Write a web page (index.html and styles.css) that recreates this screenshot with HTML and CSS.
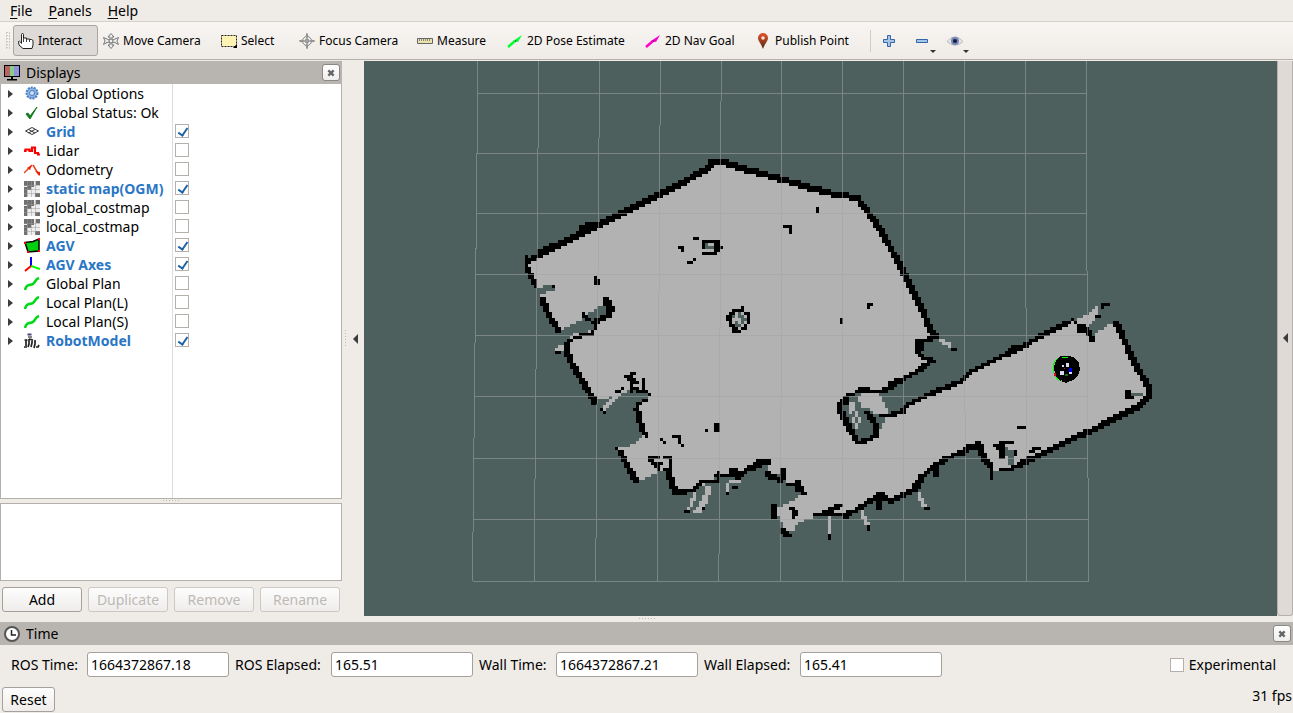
FILE: index.html
```html
<!DOCTYPE html>
<html lang="en">
<head>
<meta charset="utf-8">
<title>RViz</title>
<link rel="stylesheet" href="styles.css">
</head>
<body>
<svg class="defs" aria-hidden="true">
  <symbol id="map-icon" viewBox="0 0 16 16"><path fill="#eee" d="M0 0h16v16H0z"/><path fill="#707070" d="M0 0h4v5H0zM0 6h3v10H0zM4 0h6v6H7v3H3V5h1zM12 0h4v4h-4zM11 12h5v4h-5z"/><path stroke="#999" stroke-width="1" opacity=".5" d="M3.500 0v16M7.500 0v16M11.500 0v16M0 4.500h16M0 8.500h16M0 12.500h16" fill="none"/></symbol>
  <symbol id="path-icon" viewBox="0 0 16 16"><path d="M1 14C3 6 7 11 10 7S12 3 15 2" fill="none" stroke="#00d818" stroke-width="2.600"/></symbol>
  <symbol id="close-icon" viewBox="0 0 9 9"><path d="M1.500 1.500l6 6M7.500 1.500l-6 6" stroke="#666" stroke-width="2.600"/></symbol>
</svg>

<nav class="menubar">
  <button type="button"><u>F</u>ile</button>
  <button type="button"><u>P</u>anels</button>
  <button type="button"><u>H</u>elp</button>
</nav>

<div class="toolbar">
  <span class="grip"></span>
  <button type="button" class="tool w-interact active"><svg viewBox="0 0 16 16"><path d="M3.500 9V1.500q0-1 1-1t1 1V5h3v1h3v.5h2l1.500 1V12l-1 3.500h-9L1 12 .5 8.500q1-1 2 .5l1 1.500z" fill="#fff" stroke="#222"/><path d="M5.500 5v4M8.500 6v3M11.500 6.500V9" stroke="#444" fill="none"/></svg>Interact</button>
  <button type="button" class="tool w-move"><svg viewBox="0 0 16 16"><g fill="#eee" stroke="#777"><path d="M8 .5L11 4H9v3H7V4H5zM8 15.500L11 12H9V9H7v3H5z"/><path d="M.5 4.500L4 6l3 1.500V9L4 9.500.5 11.500 2 8zM15.500 4.500L12 6 9 7.500V9l3 .5 3.500 2L14 8z"/><circle cx="8" cy="8" r="2"/></g></svg>Move Camera</button>
  <button type="button" class="tool w-select"><svg viewBox="0 0 16 16"><path d="M.5 2.500h15v11H.5z" fill="#fff3b4" stroke="#222" stroke-dasharray="2 1"/><path d="M16 11v4h-4z"/></svg>Select</button>
  <button type="button" class="tool w-focus"><svg viewBox="0 0 16 16"><g fill="none" stroke="#888"><circle cx="8" cy="8" r="4.500"/><circle cx="8" cy="8" r="2"/><path d="M8 4v8M4 8h8"/><path fill="#ddd" d="M8 .3L9 4H7zM8 15.700L9 12H7zM.3 8L4 7v2zM15.700 8L12 7v2z"/></g></svg>Focus Camera</button>
  <button type="button" class="tool w-measure"><svg viewBox="0 0 16 16"><path d="M.5 5.500h15v5H.5z" fill="#ece2ac" stroke="#666"/><path d="M2.500 6v2M4.500 6v2M6.500 6v2M8.500 6v2M10.500 6v2M12.500 6v2" stroke="#888"/></svg>Measure</button>
  <button type="button" class="tool w-pose"><svg viewBox="0 0 16 16"><path d="M1 14L8 8" stroke="#0f3" stroke-width="2.500"/><path d="M15 2l-4 7-5-1z" fill="#0f3"/><path d="M8 7l2 1-2 1z" fill="#063"/></svg>2D Pose Estimate</button>
  <button type="button" class="tool w-nav"><svg viewBox="0 0 16 16"><path d="M1 14L8 8" stroke="#f0c" stroke-width="2.500"/><path d="M15 2l-4 7-5-1z" fill="#f0c"/><path d="M8 7l2 1-2 1z" fill="#805"/></svg>2D Nav Goal</button>
  <button type="button" class="tool w-publish"><svg viewBox="0 0 16 16"><defs><linearGradient id="pin" x2="0" y2="1"><stop offset="0" stop-color="#e8522c"/><stop offset="1" stop-color="#4b2a14"/></linearGradient></defs><path d="M8 0a5 5 0 0 1 5 5c0 3-3 5-5 11C6 10 3 8 3 5a5 5 0 0 1 5-5z" fill="url(#pin)"/><circle cx="8" cy="5" r="1.800" fill="#f7dfd5"/></svg>Publish Point</button>
  <span class="divider"></span>
  <button type="button" class="mini" aria-label="Add tool"><svg viewBox="0 0 16 16"><path d="M6.500 2.500h3v4h4v3h-4v4h-3v-4h-4v-3h4z" fill="#a5c4e8" stroke="#3465a4"/></svg></button>
  <button type="button" class="mini drop" aria-label="Remove tool"><svg viewBox="0 0 16 16"><path d="M2.500 6.500h11v3h-11z" fill="#a5c4e8" stroke="#3465a4"/></svg></button>
  <button type="button" class="mini drop" aria-label="Visibility"><svg viewBox="0 0 16 16"><path d="M0 8.500Q8-1 16 8.500 8 16 0 8.500z" fill="#e7e6e3" stroke="#bbb"/><circle cx="8" cy="8" r="4" fill="#7485bd"/><circle cx="8" cy="8" r="2" fill="#151b38"/></svg></button>
</div>

<main class="main">
  <section class="displays">
    <header class="title">
      <svg viewBox="0 0 16 16"><path d="M0 0h16v12H0z"/><path d="M1 1h5v10H1z" fill="#b86464"/><path d="M6 1h4v10H6z" fill="#86cf86"/><path d="M10 1h5v10h-5z" fill="#9292dc"/><path d="M7 12h2v2h4v1.500H3V14h4z"/></svg>
      <h2>Displays</h2>
      <button type="button" class="close" aria-label="Close Displays"><svg><use href="#close-icon"/></svg></button>
    </header>
    <ul class="tree">
      <li><button type="button" class="expand" aria-label="Expand"></button><svg viewBox="0 0 16 16"><circle cx="8" cy="7" r="5.500" fill="#8db4e4" stroke="#4a7fc4" stroke-width="2" stroke-dasharray="2 1"/><circle cx="8" cy="7" r="2.500" fill="#d2e1f4" stroke="#4a7fc4"/></svg><span>Global Options</span></li>
      <li><button type="button" class="expand" aria-label="Expand"></button><svg viewBox="0 0 16 16"><path d="M2 9l2-1 2 3 7-9-7 12z" fill="#187a20" stroke="#187a20"/></svg><span>Global Status: Ok</span></li>
      <li class="on"><button type="button" class="expand" aria-label="Expand"></button><svg viewBox="0 0 16 16"><path d="M1.500 7L8 3.500 14.500 7 8 10.500zM4.500 5.500l6.500 3.500M11 5.500L4.500 9" fill="none" stroke="#333"/></svg><label for="d1">Grid</label><input type="checkbox" id="d1" checked></li>
      <li><button type="button" class="expand" aria-label="Expand"></button><svg viewBox="0 0 16 16"><path d="M0 8h1.500V6.500h4V8H8V4.500h3V10h3v1.500h2" fill="none" stroke="#f00" stroke-width="2.200"/></svg><label for="d2">Lidar</label><input type="checkbox" id="d2"></li>
      <li><button type="button" class="expand" aria-label="Expand"></button><svg viewBox="0 0 16 16"><path d="M0 11l8-8M9 3l6 10" stroke="#e42" stroke-width="1.500"/><path d="M3 6l5-3-2 5zM11 9l5 1v4z" fill="#e20"/></svg><label for="d3">Odometry</label><input type="checkbox" id="d3"></li>
      <li class="on"><button type="button" class="expand" aria-label="Expand"></button><svg><use href="#map-icon"/></svg><label for="d4">static map(OGM)</label><input type="checkbox" id="d4" checked></li>
      <li><button type="button" class="expand" aria-label="Expand"></button><svg><use href="#map-icon"/></svg><label for="d5">global_costmap</label><input type="checkbox" id="d5"></li>
      <li><button type="button" class="expand" aria-label="Expand"></button><svg><use href="#map-icon"/></svg><label for="d6">local_costmap</label><input type="checkbox" id="d6"></li>
      <li class="on"><button type="button" class="expand" aria-label="Expand"></button><svg viewBox="0 0 16 16"><path d="M1 4.500l8-1L15 1v12l-11 1z" fill="#00d010" stroke="#000" stroke-width="1.500"/><path d="M0 4h2v2H0zM14 0h2v2h-2zM14 12h2v2h-2zM3 13h2v2H3z" fill="#f00"/></svg><label for="d7">AGV</label><input type="checkbox" id="d7" checked></li>
      <li class="on"><button type="button" class="expand" aria-label="Expand"></button><svg viewBox="0 0 16 16"><g stroke-width="2" fill="none"><path d="M7 9V0" stroke="#00f"/><path d="M7 9l9 3" stroke="#0f0"/><path d="M7 9l-6 5" stroke="#f00"/></g></svg><label for="d8">AGV Axes</label><input type="checkbox" id="d8" checked></li>
      <li><button type="button" class="expand" aria-label="Expand"></button><svg><use href="#path-icon"/></svg><label for="d9">Global Plan</label><input type="checkbox" id="d9"></li>
      <li><button type="button" class="expand" aria-label="Expand"></button><svg><use href="#path-icon"/></svg><label for="d10">Local Plan(L)</label><input type="checkbox" id="d10"></li>
      <li><button type="button" class="expand" aria-label="Expand"></button><svg><use href="#path-icon"/></svg><label for="d11">Local Plan(S)</label><input type="checkbox" id="d11"></li>
      <li class="on"><button type="button" class="expand" aria-label="Expand"></button><svg viewBox="0 0 16 16"><path d="M3.500 1.500h4" stroke="#447" stroke-width="2"/><path d="M4 4h4" stroke="#111"/><path d="M.5 7h3M2 7v6M0 14h3M5 6v5l-1 3M5 6l4 1M8 7v3l-1 4M11 7v4l-1 4M12 14h2l1-2" fill="none" stroke="#222" stroke-width="1.700"/></svg><label for="d12">RobotModel</label><input type="checkbox" id="d12" checked></li>
    </ul>
    <div class="hdots"></div>
    <div class="help"></div>
    <div class="actions">
      <button type="button" class="btn">Add</button>
      <button type="button" class="btn" disabled>Duplicate</button>
      <button type="button" class="btn" disabled>Remove</button>
      <button type="button" class="btn" disabled>Rename</button>
    </div>
  </section>
  <div class="splitter"><span class="vdots"></span><button type="button" class="arrow" aria-label="Hide left panel"></button></div>
  <div class="view">
    <svg viewBox="364 61 913 555" preserveAspectRatio="xMidYMid slice" shape-rendering="crispEdges" role="img" aria-label="Occupancy map">
      <path id="free" fill="#b2b2b2"/>
      <path id="unknown" fill="#4d605e"/>
      <path id="wall" fill="#000"/>
      <path id="grid" fill="none" stroke="#a4a4a8" stroke-opacity=".55"/>
      <g class="robot">
        <path d="M1061 356l9 0 5 2 4 5 1 7-2 6-5 4-7 3-7-3-4-5-1-8 2-7z"/>
        <path d="M1053 373v-7l2-5 3-3M1062 357h6M1055 376l4 5M1061 380v1" fill="none" stroke="#0f0"/>
        <path d="M1060 371h4v4h-4zM1066 363h3v4h-3zM1062 365h2v2h-2zM1069 371h3v3h-3z" fill="#d8dcf2"/>
        <path d="M1069 368h3v4h-3z" fill="#00f"/><path d="M1054 373h2v3h-2zM1064 368h1v1h-1z" fill="#d01020"/><path d="M1065 374h3v2h-3z" fill="#087018"/>
      </g>
    </svg>
  </div>
  <div class="right"><button type="button" class="arrow" aria-label="Show right panel"></button></div>
</main>
<div class="hdots wide"></div>

<section class="time">
  <header class="title">
    <svg viewBox="0 0 16 16"><circle cx="8" cy="8" r="7" fill="#fff" stroke="#555" stroke-width="2"/><path d="M7.500 4v5H12" fill="none" stroke="#222" stroke-width="1.500"/></svg>
    <h2>Time</h2>
    <button type="button" class="close" aria-label="Close Time"><svg><use href="#close-icon"/></svg></button>
  </header>
  <div class="clocks">
    <label for="rt">ROS Time:</label><input type="text" id="rt" value="1664372867.18">
    <label for="re">ROS Elapsed:</label><input type="text" id="re" value="165.51">
    <label for="wt">Wall Time:</label><input type="text" id="wt" value="1664372867.21">
    <label for="we">Wall Elapsed:</label><input type="text" id="we" value="165.41">
    <span class="experimental"><input type="checkbox" id="ex"><label for="ex">Experimental</label></span>
  </div>
</section>
<footer class="status"><button type="button" class="btn reset">Reset</button><span>31 fps</span></footer>
<script src="map.js"></script>
</body>
</html>
```
FILE: styles.css
```css
* { box-sizing: border-box; }
body { margin: 0; height: 100vh; display: flex; flex-direction: column; overflow: hidden; background: #efebe7; color: #000; font: 14px/18px "Noto Sans", "Open Sans", sans-serif; }
button, input { font: inherit; color: inherit; margin: 0; }
button { padding: 0; border: 0; background: none; }
svg { display: block; flex: none; width: 16px; height: 16px; }
.defs { position: absolute; width: 0; height: 0; }

.menubar { display: flex; gap: 16px; height: 22px; padding-left: 10px; border-bottom: 1px solid #d5d0cc; }
.menubar u { text-underline-offset: 2px; }
.toolbar { display: flex; align-items: center; height: 38px; flex: none; padding-left: 5px; background: linear-gradient(#f8f5f2, #efebe7); border-bottom: 1px solid #b5b0ab; font-size: 12px; line-height: 16px; }
.grip { width: 7px; height: 18px; margin-right: 1px; background: radial-gradient(circle at 1px 1px, #d0cbc6 50%, transparent 50%) 0 0 / 3px 3px; background: conic-gradient(#cdc8c3 25%, transparent 0) 0 0 / 3px 3px; background-clip: content-box; padding-right: 2px; }
.tool { display: flex; align-items: center; gap: 4px; height: 31px; padding: 0 4px; white-space: nowrap; border: 1px solid transparent; border-radius: 3px; }
.active { background: #dedad7; border-color: #aaa5a0; }
.w-interact { width: 85px; }
.w-move { width: 118px; }
.w-select { width: 78px; }
.w-focus { width: 118px; }
.w-measure { width: 90px; }
.w-pose { width: 138px; }
.w-nav { width: 110px; }
.w-publish { width: 120px; }
.divider { width: 1px; height: 22px; background: #d0cbc6; }
.mini { position: relative; width: 33px; height: 30px; padding-left: 10px; }
.drop::after { content: ""; position: absolute; right: 1px; bottom: 3px; border: 3px solid transparent; border-top-color: #333; border-bottom: 0; }

.main { display: flex; flex: 1; min-height: 0; padding-top: 1px; }
.displays { display: flex; flex-direction: column; flex: none; width: 342px; }
.title { display: flex; align-items: center; gap: 6px; flex: none; height: 23px; padding: 0 2px 0 4px; background: #b8b4b0; }
.title h2 { flex: 1; margin: 0; font-size: 14px; font-weight: 400; }
.close { display: grid; place-items: center; width: 18px; height: 17px; border: 1px solid #8d8883; border-radius: 3px; background: linear-gradient(#fff, #eee); }
.close svg { width: 8px; height: 8px; }
.tree { flex: 1; min-height: 0; margin: 0; padding: 0; list-style: none; border: 1px solid #b5b0ab; border-top: 0; background: linear-gradient(#dcdcdc, #dcdcdc) 171px 0 / 1px 100% no-repeat #fff; }
.tree li { display: grid; grid-template-columns: 23px 22px 129px 14px; align-items: center; height: 19px; white-space: nowrap; }
.tree input { align-self: start; margin-top: 2px; }
.expand { width: 0; height: 8px; margin-left: 7px; border: 4px solid transparent; border-left: 5px solid #3c3c3c; border-right: 0; }
.on label { color: #2a76c6; font-weight: 700; }
input[type="checkbox"] { appearance: none; width: 14px; height: 14px; border: 1px solid #b5b0ab; background: #fff; position: relative; }
input:checked::after { content: ""; position: absolute; left: 4px; top: 1px; width: 4px; height: 8px; border: solid #1f62a5; border-width: 0 2px 2px 0; transform: rotate(35deg); }
.hdots { flex: none; height: 4px; background: linear-gradient(90deg, #bfbab5 1px, transparent 1px) 0 1px / 3px 1px content-box repeat-x; padding: 0 163px; }
.help { flex: none; height: 78px; border: 1px solid #b5b0ab; background: #fff; }
.actions { display: flex; gap: 6px; padding: 6px 2px 4px; }
.btn { flex: 1; height: 25px; border: 1px solid #a5a09b; border-radius: 3px; background: linear-gradient(#fdfdfd, #efedeb); }
.btn:disabled { color: #bdb9b6; border-color: #ccc8c4; }
.splitter { display: flex; align-items: center; flex: none; width: 22px; padding-left: 3px; gap: 7px; }
.vdots { width: 1px; height: 17px; background: linear-gradient(#bfbab5 1px, transparent 1px) 0 0 / 1px 3px; }
.arrow { width: 5px; height: 10px; border: 5px solid transparent; border-right-color: #3c3c3c; border-left: 0; }
.view { flex: 1; min-width: 0; background: #4d605e; }
.view svg { width: 100%; height: 100%; }
.right { display: flex; align-items: center; justify-content: center; flex: none; width: 16px; border: 1px solid #b5b0ab; border-top: 0; border-radius: 0 0 3px 3px; background: #dedad7; }
.wide { height: 6px; width: 16px; padding: 0; margin: 0 auto; background-position: 0 2px; }

.clocks { display: grid; grid-template-columns: 70px 142px 90px 142px 71px 142px 90px 142px 1fr; column-gap: 6px; align-items: center; height: 39px; padding: 0 17px 0 11px; white-space: nowrap; }
.clocks input[type="text"] { width: 142px; height: 25px; padding: 0 3px; border: 1px solid #a5a09b; border-radius: 3px; background: #fff; }
.experimental { display: flex; align-items: center; justify-content: flex-end; gap: 5px; }
.status { display: flex; justify-content: space-between; flex: none; height: 29px; padding: 3px 1px 1px 2px; }
.reset { flex: none; width: 53px; }
```
FILE: map.js
```js
// Occupancy map: outlines are rasterised into square cells.
const CELL = 3;
const cellOf = v => Math.floor(v / CELL);
const parse = s => s.trim().split(/\s+/).map(p => p.split(",").map(Number));

const outline = `525,262 538,255 553,247 587,230 617,216 657,196 687,180 710,168 715,163 725,163 740,168 777,179 807,188 840,197 857,198
 867,208 880,227 893,250 907,278 920,303 932,332 923,342 918,348 922,355 932,360 920,370 900,380 885,391 863,390 838,402 847,423 858,443 878,435
 886,416 900,413 907,405 927,395 947,387 960,382 970,372 1003,355 1027,343 1047,332 1067,323 1088,315 1097,307 1099,316 1087,328 1093,337 1108,324
 1115,323 1123,337 1130,353 1138,370 1145,380 1150,390 1150,398 1127,412 1110,418 1097,427 1073,437 1053,447 1040,453 1020,463 1002,470 992,470
 983,453 980,445 973,445 963,453 947,458 935,468 920,478 917,488 903,495 890,502 883,495 867,503 853,512 840,515 817,515 807,520 797,523
 792,533 785,530 780,517 775,510 793,500 803,494 800,482 790,487 783,472 773,478 765,462 740,475 717,477 703,485 693,492 675,492 670,477 665,468
 657,473 645,478 637,482 627,465 618,448 633,445 645,435 640,425 637,413 640,405 650,395 643,390 620,392 600,401 590,393 580,377 570,360 567,350
 568,342 577,337 593,333 595,323 607,318 612,310 607,302 560,332 548,313 542,297 537,287 530,275 525,265`;

// [points, brush columns, brush rows]
const walls = [
  ["527,261 538,256 553,247 587,230 617,216 657,195 687,180 710,167 714,163 725,163 740,168 777,178 807,187 840,196 857,197", 1, 2],
  ["857,197 867,210 880,229 893,252 907,280 920,305 932,332", 2, 1], ["540,253 556,245", 2, 2], ["582,228 597,224", 2, 2], ["712,162 726,162", 2, 2],
  ["932,332 937,337 923,341 918,345 918,352 924,358 932,360 920,370 900,380 883,392 873,392", 2, 1],
  ["918,341 918,350", 3, 1], ["900,380 892,384", 2, 2],
  ["868,389 860,391 847,396", 1, 1], ["860,391 868,389", 2, 2], ["840,402 841,412 847,423 852,432 858,443 867,440 877,435 875,423 868,413", 2, 1], ["842,402 846,400", 2, 2],
  ["883,416 900,413 907,405 927,395 947,387 960,382 970,372 980,367", 2, 1],
  ["980,367 1003,356 1027,344 1047,333 1067,323", 2, 1], ["1010,351 1020,347", 2, 2],
  ["1079,325 1085,328 1093,339", 2, 1], ["1081,329 1085,329", 2, 2], ["1073,319 1074,321", 1, 1],
  ["1097,315 1098,315", 1, 1], ["1101,307 1107,303", 1, 1],
  ["1116,322 1123,337 1130,353 1138,370 1145,380 1150,390 1150,397", 2, 1],
  ["1148,396 1140,405 1127,412 1110,420 1097,428 1073,438 1053,448 1040,455 1020,464", 1, 2],
  ["1020,464 1012,468 1002,470", 2, 1], ["991,462 991,477", 1, 1], ["983,456 978,445", 2, 2], ["978,445 973,444 960,455", 2, 1], ["983,456 991,466", 2, 1],
  ["980,445 967,450 947,458 935,466 920,478 915,488 903,495 892,501", 2, 1], ["936,466 936,476", 2, 1], ["920,481 915,488", 2, 2],
  ["889,500 880,494 867,503 853,512 840,515 817,515", 2, 1], ["879,495 879,507", 2, 1], ["840,506 825,513", 2, 1], ["815,514 847,516", 2, 1],
  ["803,493 799,485 790,485", 2, 1], ["799,482 799,490", 2, 1], ["783,472 781,481", 2, 2], ["773,478 768,474", 2, 2], ["765,461 759,462", 3, 2], ["759,464 751,468", 2, 2],
  ["774,508 774,515", 2, 2], ["783,530 789,536", 2, 1], ["791,508 797,512 793,517", 1, 1],
  ["751,467 740,475 735,473 727,475 718,474", 2, 1], ["732,470 738,478", 2, 2], ["718,472 717,480 703,481 693,490 675,491", 1, 1], ["683,491 675,491", 2, 2],
  ["675,491 670,477 667,468", 2, 1], ["636,481 627,465 620,450", 2, 1], ["616,447 617,447", 1, 1],
  ["646,435 640,425 637,413 638,404 645,400", 1, 1], ["637,408 642,429", 2, 1],
  ["650,394 643,391 633,389", 1, 1], ["644,379 643,390", 1, 1], ["633,372 632,391", 1, 1], ["626,376 635,381", 2, 1], ["617,392 623,388", 1, 1],
  ["595,402 590,393 580,377 570,360 567,350 567,342", 2, 1], ["602,410 603,411", 1, 1], ["566,342 577,337 592,333 596,325 586,318 582,314", 1, 1],
  ["557,351 558,351", 2, 1], ["596,321 607,316 611,310", 2, 1], ["611,309 606,301", 2, 2],
  ["559,331 548,313 542,297", 2, 1], ["536,286 530,275 525,265 527,258", 1, 2],
  ["706,240 715,240 717,246 715,253 706,253", 2, 1], ["703,244 704,246", 1, 1], ["720,247 722,247", 1, 1], ["717,245 717,250", 2, 1],
  ["694,239 697,239", 1, 1], ["680,248 682,248 682,251", 1, 1], ["687,262 690,262 694,260", 1, 1],
  ["596,278 597,284", 1, 1], ["598,281 599,284", 1, 1], ["552,286 553,287", 1, 1],
  ["742,307 742,311 747,314 748,322 744,328 737,332 733,327 728,317 733,311 740,311", 1, 1], ["735,329 736,331", 2, 1],
  ["816,208 816,212", 1, 1], ["785,227 789,227 789,231", 1, 1], ["871,303 868,303 868,307", 1, 1], ["840,318 840,322", 1, 1],
  ["717,426 718,428", 2, 2], ["705,431 706,431", 1, 1], ["662,440 663,441", 1, 1], ["674,437 678,437 678,442 681,444", 1, 1],
  ["650,456 657,456", 1, 1], ["650,460 655,464 658,469 660,463", 1, 1], ["665,457 669,457 669,465", 1, 1],
  ["1018,428 1024,428", 1, 1], ["1021,426 1024,426", 1, 1], ["997,445 1010,442", 2, 1], ["1000,447 1003,458", 2, 1], ["1014,450 1015,454", 1, 1],
  ["1030,451 1038,448", 1, 1], ["1128,392 1128,398", 2, 1], ["1132,397 1133,397", 1, 1],
  ["686,511 688,511", 1, 1], ["702,508 703,508", 1, 1], ["828,536 828,537", 1, 1], ["868,527 868,528", 1, 1], ["926,508 927,509", 1, 1], ["953,348 954,349", 1, 1], ["727,493 728,493", 1, 1], ["734,486 735,486", 1, 1]
];
const freeLines = [
  ["695,492 692,503 688,509", 1, 1], ["709,486 704,502 697,511", 2, 1], ["728,483 727,491", 1, 1], ["732,481 738,482", 2, 1], ["828,518 828,534", 1, 1],
  ["862,512 865,520 868,524", 1, 1], ["918,493 921,500 925,506", 1, 1], ["940,340 950,346", 1, 1], ["603,408 612,400 621,391", 1, 1],
  ["559,349 562,347", 2, 1], ["572,336 590,332", 1, 1], ["567,326 580,316 588,309", 1, 1]
];
const pockets = [
  "560,332 569,326 585,318 607,303 610,311 589,321 587,332 565,335", "538,289 550,284 557,288 549,292 540,294",
  "704,244 711,242 714,248 704,250", "733,315 740,313 746,320 741,327 735,326",
  "849,401 857,399 861,412 868,417 869,425 875,432 866,438 858,432", "879,396 888,394 920,374 917,392 886,413",
  "1006,448 1013,449 1013,465 1007,463", "1132,394 1144,394 1144,397 1132,397", "760,463 763,463 763,467 760,467"
];
const speckles = ["849,403 851,412", "852,403 853,409", "857,412 859,421", "854,418 856,427", "737,316 739,323", "709,243 712,243", "577,320 586,315", "656,460 657,461", "779,512 785,512"];
const openings = ["858,398 865,392 879,393 886,406 888,414 876,415 868,408 863,408"];

function inside(x, y, poly) {
  let hit = false;
  for (let i = 0, j = poly.length - 1; i < poly.length; j = i++) {
    const [ax, ay] = poly[i], [bx, by] = poly[j];
    if ((ay > y) !== (by > y) && x < (bx - ax) * (y - ay) / (by - ay) + ax) hit = !hit;
  }
  return hit;
}
function fillCells(text, out) {
  const poly = parse(text);
  const xs = poly.map(p => p[0]), ys = poly.map(p => p[1]);
  for (let cy = cellOf(Math.min(...ys)); cy <= cellOf(Math.max(...ys)); cy++)
    for (let cx = cellOf(Math.min(...xs)); cx <= cellOf(Math.max(...xs)); cx++)
      if (inside((cx + .5) * CELL, (cy + .5) * CELL, poly)) out.add(cx + "," + cy);
}
function lineCells(text, w, h, out) {
  const pts = parse(text);
  for (let i = 1; i < pts.length; i++) {
    const [ax, ay] = pts[i - 1], [bx, by] = pts[i];
    const steps = Math.max(Math.abs(bx - ax), Math.abs(by - ay), 1);
    for (let s = 0; s <= steps; s++) {
      const cx = cellOf(ax + (bx - ax) * s / steps - (w - 1) * CELL / 2);
      const cy = cellOf(ay + (by - ay) * s / steps - (h - 1) * CELL / 2);
      for (let dx = 0; dx < w; dx++) for (let dy = 0; dy < h; dy++) out.add((cx + dx) + "," + (cy + dy));
    }
  }
}
function paint(id, cells) {
  document.getElementById(id).setAttribute("d", [...cells].map(c => {
    const [x, y] = c.split(",").map(Number);
    return `M${x * CELL} ${y * CELL}h${CELL}v${CELL}h-${CELL}z`;
  }).join(""));
}
const free = new Set(), unknown = new Set(), wall = new Set();
fillCells(outline, free);
freeLines.forEach(([p, w, h]) => lineCells(p, w, h, free));
pockets.forEach(p => fillCells(p, unknown));
const light = new Set();
openings.forEach(p => fillCells(p, light));
speckles.forEach(p => lineCells(p, 1, 1, light));
light.forEach(c => { unknown.delete(c); free.add(c); });
walls.forEach(([p, w, h]) => lineCells(p, w, h, wall));
paint("free", free);
paint("unknown", unknown);
paint("wall", wall);

let lines = "";
for (let i = 0; i <= 10; i++) lines += `M${478 + i * 60.8} 61L${472.5 + i * 61.6} 581`;
[93, 153, 213, 274, 335, 396, 458, 519, 581].forEach(y => {
  const t = (y - 61) / 520;
  lines += `M${478 - 5.5 * t} ${y}.5H${1086 + 2.5 * t}`;
});
document.getElementById("grid").setAttribute("d", lines);
```
